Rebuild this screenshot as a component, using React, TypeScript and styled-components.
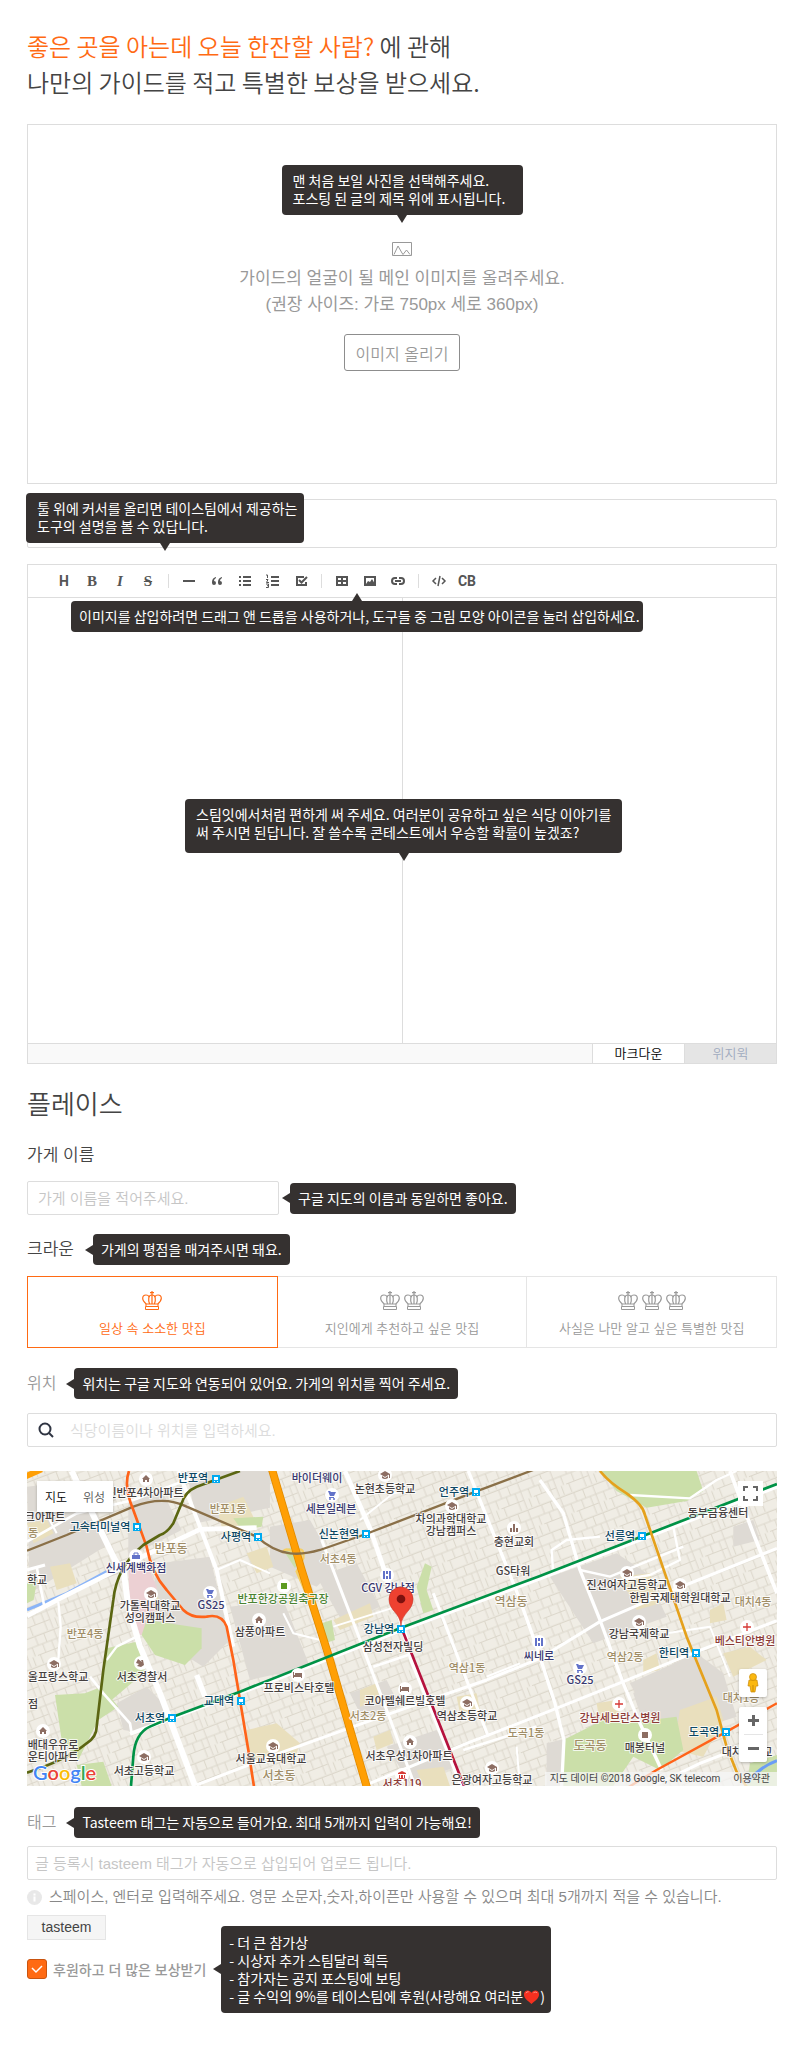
import React from "react";
import styled, { createGlobalStyle, css } from "styled-components";

const GlobalStyle = createGlobalStyle`
  *, *::before, *::after { box-sizing: border-box; }
  body {
    margin: 0;
    background: #fff;
    color: #444;
    font-family: "Liberation Sans", "Noto Sans CJK KR", sans-serif;
  }
  button, input, textarea { font-family: inherit; font-weight: inherit; margin: 0; }
  h1, h2, p { margin: 0; font-weight: 400; }
`;

const ACCENT = "#ff6a13";
const LINE = "#dddddd";

const Page = styled.main`
  padding: 28px 31px 81px 27px;
  font-weight: 350;
`;

const Title = styled.h1`
  font-family: "Noto Sans CJK KR", sans-serif;
  font-size: 24px;
  font-weight: 350;
  line-height: 36px;
  margin-bottom: 24px;
  em { font-style: normal; color: ${ACCENT}; }
`;

/* ---------- tooltips ---------- */

type Side = "top" | "bottom" | "left";

const Tip = styled.div<{ $side: Side }>`
  position: relative;
  z-index: 2;
  background: #353130;
  color: #fff;
  border-radius: 4px;
  font-family: "Noto Sans CJK KR", sans-serif;
  font-size: 14px;
  font-weight: 400;
  line-height: 18px;
  padding: 6px 8px 7px;
  white-space: nowrap;
  text-align: left;
  &::after {
    content: "";
    position: absolute;
    border: 5px solid transparent;
    ${(p) =>
      p.$side === "bottom" &&
      css`top: 100%; left: 50%; margin-left: -5px; border-top: 8px solid #353130; border-bottom: 0;`}
    ${(p) =>
      p.$side === "top" &&
      css`bottom: 100%; left: 50%; margin-left: -5px; border-bottom: 8px solid #353130; border-top: 0;`}
    ${(p) =>
      p.$side === "left" &&
      css`right: 100%; top: 50%; margin-top: -5px; border-right: 8px solid #353130; border-left: 0;`}
  }
`;

const UploadTip = styled(Tip)`
  width: 241px;
  padding: 6px 11px 8px;
`;

const ToolTip = styled(Tip)`
  position: absolute;
  left: -1px;
  top: -6px;
  width: 278px;
  padding: 6px 11px 8px;
`;

const DropTip = styled(Tip)`
  position: absolute;
  left: 43px;
  top: 3px;
  width: 572px;
`;

const WriteTip = styled(Tip)`
  position: absolute;
  left: 50%;
  top: 201px;
  width: 437px;
  margin-left: -217px;
  padding: 6px 11px 12px;
`;

/* ---------- main image ---------- */

const UploadBox = styled.section`
  display: flex;
  flex-direction: column;
  align-items: center;
  height: 360px;
  padding-top: 40px;
  border: 1px solid ${LINE};
  color: #999;
  font-size: 17px;
  line-height: 26px;
  text-align: center;
  svg { margin: 27px 0 10px; }
`;

const UploadButton = styled.button`
  width: 116px;
  height: 37px;
  margin-top: 16px;
  padding: 0;
  border: 1px solid #8d8d8d;
  border-radius: 3px;
  background: #fff;
  color: #999;
  font-size: 16px;
`;

/* ---------- inputs ---------- */

const TextInput = styled.input<{ $soft?: boolean }>`
  display: block;
  width: 100%;
  height: 34px;
  padding: 0 7px;
  border: 1px solid ${LINE};
  border-radius: 2px;
  background: #fff;
  color: #444;
  font-size: 15px;
  outline: none;
  &::placeholder { color: ${(p) => (p.$soft ? "#dcdcdc" : "#c6c6c6")}; opacity: 1; }
`;

const SubjectField = styled.div`
  position: relative;
  margin: 15px 0 16px;
  ${TextInput} { height: 49px; }
`;

/* ---------- editor ---------- */

const Editor = styled.section`
  display: flex;
  flex-direction: column;
  height: 500px;
  border: 1px solid ${LINE};
`;

const Toolbar = styled.div`
  display: flex;
  align-items: center;
  height: 33px;
  padding-left: 22px;
  border-bottom: 1px solid ${LINE};
`;

const Tool = styled.button<{ $serif?: boolean; $italic?: boolean }>`
  display: flex;
  align-items: center;
  justify-content: center;
  width: 28px;
  height: 28px;
  padding: 0;
  border: 0;
  background: none;
  color: #555;
  font-family: ${(p) => (p.$serif ? '"Liberation Serif", serif' : "Roboto, sans-serif")};
  font-size: ${(p) => (p.$serif ? 15 : 14)}px;
  font-weight: 700;
  font-style: ${(p) => (p.$italic ? "italic" : "normal")};
`;

const Divider = styled.span`
  width: 1px;
  height: 14px;
  margin: 0 6px;
  background: #ddd;
`;

const Panes = styled.div`
  position: relative;
  display: flex;
  flex: 1;
`;

const Source = styled.textarea`
  width: 50%;
  padding: 12px;
  border: 0;
  resize: none;
  outline: none;
`;

const Preview = styled.div`
  width: 50%;
  border-left: 1px solid ${LINE};
`;

const ModeBar = styled.div`
  display: flex;
  justify-content: flex-end;
  height: 20px;
  border-top: 1px solid ${LINE};
  background: #f9f9f9;
`;

const ModeTab = styled.button<{ $on?: boolean }>`
  width: 92px;
  padding: 0;
  border: 0;
  border-left: 1px solid ${LINE};
  background: ${(p) => (p.$on ? "#fff" : "#e5e5e5")};
  color: ${(p) => (p.$on ? "#000" : "#a0aabf")};
  font-size: 13px;
  line-height: 18px;
`;

/* ---------- place ---------- */

const PlaceTitle = styled.h2`
  margin: 23px 0 21px;
  font-size: 26px;
  font-weight: 350;
  line-height: 36px;
`;

const Label = styled.label<{ $muted?: boolean }>`
  display: block;
  color: ${(p) => (p.$muted ? "#999" : "#444")};
  font-size: ${(p) => (p.$muted ? 16 : 17)}px;
  line-height: 24px;
`;

const Row = styled.div<{ $top: number; $bottom: number; $gap: number }>`
  display: flex;
  align-items: center;
  gap: ${(p) => p.$gap}px;
  margin: ${(p) => p.$top}px 0 ${(p) => p.$bottom}px;
`;

const NameInput = styled(TextInput)`
  width: 252px;
  padding: 0 10px;
`;

const Grades = styled.div`
  display: flex;
`;

const Grade = styled.button<{ $on?: boolean }>`
  display: flex;
  flex: 1;
  flex-direction: column;
  align-items: center;
  gap: 9px;
  height: 72px;
  padding: 14px 0 0;
  border: 1px solid ${(p) => (p.$on ? ACCENT : "#e5e5e5")};
  background: #fff;
  color: ${(p) => (p.$on ? ACCENT : "#999")};
  font-size: 13px;
  line-height: 20px;
  & + & { border-left: 0; }
  span { display: flex; gap: 4px; }
`;

const Search = styled.div`
  display: flex;
  align-items: center;
  height: 34px;
  padding-left: 10px;
  border: 1px solid ${LINE};
  border-radius: 2px;
  ${TextInput} { flex: 1; height: 30px; border: 0; padding: 0 16px; }
`;

/* ---------- map ---------- */

const MapBox = styled.section`
  position: relative;
  height: 315px;
  margin-top: 24px;
  overflow: hidden;
  background: #f0ede5;
  > svg { display: block; width: 100%; height: 100%; }
`;

const MapTypes = styled.div`
  position: absolute;
  left: 10px;
  top: 10px;
  display: flex;
  border-radius: 2px;
  box-shadow: 0 1px 3px rgba(0, 0, 0, 0.25);
`;

const MapType = styled.button<{ $on?: boolean }>`
  width: 38px;
  height: 31px;
  padding: 0;
  border: 0;
  background: #fff;
  color: ${(p) => (p.$on ? "#000" : "#565656")};
  font-size: 12px;
`;

const Fullscreen = styled.button`
  position: absolute;
  right: 14px;
  top: 10px;
  display: flex;
  align-items: center;
  justify-content: center;
  width: 25px;
  height: 25px;
  padding: 0;
  border: 0;
  background: #fff;
`;

const SideControls = styled.div`
  position: absolute;
  right: 10px;
  bottom: 24px;
  display: flex;
  flex-direction: column;
  gap: 10px;
`;

const Control = styled.div`
  display: flex;
  flex-direction: column;
  align-items: center;
  width: 28px;
  border-radius: 2px;
  background: #fff;
  box-shadow: 0 1px 3px rgba(0, 0, 0, 0.25);
  hr { width: 19px; height: 1px; margin: 0; border: 0; background: #e5e5e5; }
`;

const ControlButton = styled.button<{ $h: number }>`
  display: flex;
  align-items: center;
  justify-content: center;
  width: 28px;
  height: ${(p) => p.$h}px;
  padding: 0;
  border: 0;
  background: none;
`;

const Attribution = styled.div`
  position: absolute;
  right: 0;
  bottom: 0;
  display: flex;
  gap: 13px;
  padding: 0 7px 0 5px;
  background: rgba(245, 245, 245, 0.75);
  color: #444;
  font-family: Roboto, "Noto Sans CJK KR", sans-serif;
  font-size: 10px;
  font-weight: 400;
  line-height: 14px;
  white-space: nowrap;
  a { color: #444; text-decoration: none; }
`;

/* ---------- tags ---------- */

const Hint = styled.p`
  display: flex;
  align-items: center;
  gap: 7px;
  margin: 5px 0 6px;
  color: #888;
  font-size: 15px;
  font-weight: 350;
  line-height: 24px;
  white-space: nowrap;
`;

const Tag = styled.span`
  display: block;
  width: 79px;
  height: 25px;
  border: 1px solid #e5e5e5;
  background: #f5f5f5;
  color: #444;
  font-size: 14px;
  line-height: 23px;
  text-align: center;
`;

const SupportRow = styled.div`
  display: flex;
  align-items: center;
  gap: 15px;
  height: 24px;
  margin-top: 17px;
`;

const SupportLabel = styled.label`
  display: flex;
  align-items: center;
  gap: 6px;
  color: #999;
  font-size: 14px;
  font-weight: 500;
  white-space: nowrap;
`;

const Tick = styled.span`
  position: relative;
  display: flex;
  input {
    appearance: none;
    width: 20px;
    height: 20px;
    margin: 0;
    border: 1px solid #c9540f;
    border-radius: 3px;
    background: ${ACCENT};
  }
  svg { position: absolute; left: 4px; top: 5px; pointer-events: none; }
`;

const SupportTip = styled(Tip)`
  width: 330px;
  padding: 7px 8px 8px;
  svg { vertical-align: -3px; }
`;

/* ---------- icons ---------- */

const Crown = () => (
  <svg width="20" height="19" viewBox="0 0 20 19" fill="none" stroke="currentColor" aria-hidden="true">
    <path d="M10 0v13M8 1.700h4" strokeWidth="1.200" />
    <path d="M4.200 13C1.500 10.500.7 9 .7 7.300.7 5.200 2.200 4 4 4c1.400 0 2.500.6 3.100 1.700M15.800 13c2.700-2.500 3.500-4 3.500-5.700C19.300 5.200 17.800 4 16 4c-1.400 0-2.500.6-3.100 1.700" strokeWidth="1.200" />
    <path d="M7.600 13C6 8.500 6.200 4 10 4s4 4.500 2.400 9" strokeWidth="1.200" />
    <path d="M4 13h12v2.500H4zM3.500 15.500h13v3h-13z" />
  </svg>
);

const ToolIcon = ({ children }: { children: React.ReactNode }) => (
  <svg width="16" height="14" viewBox="0 0 16 14" fill="none" stroke="#555" strokeWidth="2" aria-hidden="true">
    {children}
  </svg>
);

/* ---------- map data ---------- */

type Pt = [number, number];

const stations: [string, number, number, number, number][] = [
  ["반포역", 166, 7, 189, 8],
  ["고속터미널역", 73, 56, 110, 56],
  ["사평역", 209, 66, 231, 66],
  ["교대역", 192, 230, 214, 230],
  ["서초역", 123, 247, 145, 247],
  ["언주역", 427, 21, 449, 21],
  ["신논현역", 312, 63, 339, 63],
  ["강남역", 352, 158, 374, 158],
  ["선릉역", 593, 65, 615, 65],
  ["한티역", 647, 182, 669, 182],
  ["도곡역", 677, 261, 699, 261],
];

type Kind = "poi" | "shop" | "area" | "park" | "hospital";

const labelColor: Record<Kind, string> = {
  poi: "#45403f",
  shop: "#38386f",
  area: "#a08d66",
  park: "#4b8432",
  hospital: "#8c3a36",
};

const labels: [string, number, number, Kind, number?][] = [
  ["신반포4차아파트", 118, 22, "poi"],
  ["크아파트", 18, 46, "poi"],
  ["동", 6, 62, "area"],
  ["반포1동", 201, 38, "area"],
  ["반포동", 144, 78, "area", 12],
  ["신세계백화점", 109, 97, "shop"],
  ["학교", 10, 109, "poi"],
  ["가톨릭대학교", 123, 135, "poi"],
  ["성의캠퍼스", 123, 147, "poi"],
  ["GS25", 184, 134, "shop"],
  ["반포한강공원축구장", 256, 128, "park"],
  ["반포4동", 58, 163, "area"],
  ["삼풍아파트", 233, 161, "poi"],
  ["울프랑스학교", 31, 206, "poi"],
  ["서초경찰서", 115, 206, "poi"],
  ["점", 6, 233, "poi"],
  ["배대우유로", 26, 274, "poi"],
  ["운티아파트", 26, 286, "poi"],
  ["서초고등학교", 117, 300, "poi"],
  ["프로비스타호텔", 272, 217, "poi"],
  ["서울교육대학교", 244, 288, "poi"],
  ["서초동", 252, 305, "area", 12],
  ["바이더웨이", 290, 7, "shop"],
  ["논현초등학교", 358, 18, "poi"],
  ["세븐일레븐", 304, 38, "shop"],
  ["차의과학대학교", 424, 48, "poi"],
  ["강남캠퍼스", 424, 60, "poi"],
  ["충현교회", 487, 71, "poi"],
  ["서초4동", 311, 88, "area"],
  ["GS타워", 486, 100, "poi"],
  ["CGV 강남점", 361, 117, "shop"],
  ["역삼동", 484, 131, "area", 12],
  ["삼성전자빌딩", 366, 176, "poi"],
  ["역삼1동", 440, 197, "area"],
  ["씨네로", 512, 185, "shop"],
  ["코아텔쉐르빌호텔", 378, 230, "poi"],
  ["서초2동", 341, 245, "area"],
  ["역삼초등학교", 440, 245, "poi"],
  ["도곡1동", 499, 262, "area"],
  ["서초우성1차아파트", 382, 285, "poi"],
  ["은광여자고등학교", 465, 309, "poi"],
  ["서초119", 375, 313, "hospital"],
  ["동부금융센터", 691, 42, "poi"],
  ["진선여자고등학교", 600, 114, "poi"],
  ["한림국제대학원대학교", 653, 127, "poi"],
  ["대치4동", 726, 131, "area"],
  ["강남국제학교", 612, 163, "poi"],
  ["베스티안병원", 718, 170, "hospital"],
  ["역삼2동", 598, 186, "area"],
  ["GS25", 553, 209, "shop"],
  ["대치1동", 714, 227, "area"],
  ["강남세브란스병원", 593, 247, "hospital"],
  ["도곡동", 563, 275, "area", 12],
  ["매봉터널", 618, 277, "poi"],
  ["대치중학교", 720, 281, "poi"],
];

type Mark = "school" | "home" | "cart" | "cross" | "film" | "box" | "green" | "bed" | "bag" | "church" | "bank" | "police";

const marks: [Mark, number, number][] = [
  ["home", 119, 8], ["bag", 109, 85], ["school", 124, 123], ["cart", 183, 122],
  ["home", 232, 149], ["school", 27, 193], ["police", 114, 192], ["home", 16, 260],
  ["school", 117, 286], ["school", 246, 275], ["school", 358, 4], ["cart", 305, 24],
  ["school", 425, 35], ["church", 487, 57], ["film", 360, 104], ["green", 257, 115],
  ["bed", 271, 204], ["bed", 378, 218], ["school", 440, 232], ["home", 383, 271],
  ["school", 465, 297], ["bank", 375, 304], ["film", 512, 171], ["school", 600, 102],
  ["school", 653, 114], ["school", 612, 151], ["cross", 720, 156], ["cart", 553, 197],
  ["cross", 592, 233], ["box", 618, 264],
];

const markShape: Record<Mark, React.ReactNode> = {
  school: <g fill="#8d6e63"><path d="M-5-1 0-4 5-1 0 2z" /><path d="M-3 1v2q3 2 6 0V1L0 3zM4-1h1v4H4z" /></g>,
  home: <path fill="#8d6e63" d="M-4 0 0-4 4 0H3v3H1V1h-2v2h-2V0z" />,
  cart: <g fill="#6272c9"><path d="M-4-4h2l1 1h5L2 1h-4z" /><path d="M-3 2h5v1h-5z" /><circle cx="-2" cy="4" r="1" /><circle cx="2" cy="4" r="1" /></g>,
  bag: <g><path fill="#6272c9" d="M-4-1h8v4h-8z" /><path d="M-2-1v-2h4v2" fill="none" stroke="#6272c9" /></g>,
  cross: <path d="M-4 0h8M0-4v8" stroke="#d63a36" strokeWidth="1.3" />,
  film: <g fill="#6272c9"><path d="M-4-4h2v8h-2zM2-4h2v8H2zM-1-4h2v3h-2zM-1 1h2v3h-2z" /></g>,
  box: <path fill="#8d6e63" d="M-3-3h6v6h-6z" />,
  green: <path fill="#5c9b22" d="M-3-3h6v6h-6z" />,
  bed: <path fill="#8d6e63" d="M-5-3h1v3h1v-2h7v5H3V2h-7v1h-1z" />,
  church: <path fill="#8d6e63" d="M-1-4h2v8h-2zM-4 0h2v4h-2zM2 0h2v4H2z" />,
  bank: <path fill="#d63a36" d="M-4-2 0-4l4 2v1h-8zM-3 0h1v3h-1zM-1 0h2v3h-2zM2 0h1v3H2zM-4 3h8v1h-8z" />,
  police: <path fill="#8d6e63" d="M-3-4 1-1 0-3h2l1 5-3 2-4-1 2-2-3-1z" />,
};

const toPath = (pts: Pt[]) => "M" + pts.map((p) => p.join(" ")).join("L");

/* Streets and blocks are drawn on a grid three times finer than the map. */
const majorRoads: [number, Pt[]][] = [
  [18, [[215, 33], [345, 300], [372, 340], [385, 440], [420, 560], [480, 700], [585, 978]]],
  [12, [[535, 33], [600, 200], [650, 330], [680, 470], [700, 560]]],
  [14, [[81, 468], [180, 415], [340, 335], [410, 298], [600, 208], [770, 203]]],
  [10, [[81, 330], [135, 315]]],
  [8, [[110, 320], [132, 435]]],
  [7, [[175, 425], [182, 500], [175, 600]]],
  [8, [[81, 245], [230, 160], [400, 120], [560, 60], [610, 33]]],
  [6, [[128, 140], [170, 220]]],
  [7, [[410, 530], [350, 560], [320, 600]]],
  [8, [[270, 650], [310, 700], [390, 790], [395, 820]]],
  [12, [[390, 822], [515, 775], [810, 665], [1200, 512], [1620, 355], [2331, 80]]],
  [9, [[590, 975], [810, 890], [1045, 805], [1230, 740], [1460, 660], [1620, 595], [1800, 485], [2020, 390], [2331, 265]]],
  [9, [[1110, 970], [1400, 850], [1620, 765], [1870, 665], [2090, 575], [2331, 482]]],
  [14, [[1035, 33], [1110, 205], [1160, 350], [1205, 490], [1235, 600], [1300, 760], [1385, 978]]],
  [9, [[965, 240], [1065, 500], [1160, 750], [1245, 978]]],
  [9, [[1300, 400], [1350, 530], [1465, 830]]],
  [10, [[1405, 33], [1500, 270], [1560, 420], [1610, 560], [1665, 730], [1692, 840], [1685, 978]]],
  [10, [[1620, 60], [1690, 160], [1740, 330], [1800, 480], [1870, 670], [1920, 790], [1985, 930]]],
  [11, [[2190, 33], [2260, 220], [2331, 400]]],
  [7, [[1890, 105], [2070, 115], [2150, 60], [2210, 33]]],
  [7, [[1830, 365], [1950, 345], [2040, 300], [2020, 200]]],
  [7, [[1660, 340], [1655, 270], [1700, 240], [1800, 230]]],
  [7, [[1740, 330], [1830, 350], [2050, 260]]],
  [6, [[650, 330], [720, 300], [810, 340]]],
  [6, [[1000, 500], [1190, 440]]],
  [6, [[850, 460], [880, 520], [960, 540]]],
  [8, [[1120, 620], [1240, 580]]],
  [6, [[1460, 650], [1560, 610]]],
  [6, [[1080, 180], [1180, 100], [1240, 90]]],
  [8, [[1390, 870], [1610, 800]]],
  [6, [[1550, 860], [1560, 978]]],
  [6, [[2000, 520], [2130, 500], [2190, 650]]],
  [9, [[1960, 978], [2100, 910], [2230, 860]]],
];

const grayBlocks = [
  "M81 80 250 60 330 250 90 400z", "M560 33h250v110L590 190z", "M385 120l100-30 60 120-160 80z",
  "M480 310l150-20 60 250-80 80-190-120z", "M690 440l160-20 80 200-180 40z",
  "M350 730l90-50 60 60-70 80-60-10z", "M810 200l120-20 80 140-60 60-140-60z",
  "M950 350l120-40 70 130-110 50z", "M1650 350l200-70 90 60 60 130-220 80z",
  "M1900 700l140-80 60 60-30 90-140 20z", "M1890 670l200-90 80 60 40 130-220 70z",
  "M1050 700l110-40 40 80-110 40z", "M1160 860l150-50 60 110-140 50z", "M1640 850l80-20 10 148h-90z",
  "M2200 200l60-20 20 60-80 20z", "M810 560l100 40-40 50-60-10z",
];

const sandBlocks = [
  "M650 140l80-30 30 60-30 60-60-10z", "M740 280l60-20 20 60-50 20z", "M150 320l60-10 20 60-60 20z",
  "M81 190l60-10 20 40-60 30z", "M400 400l60-30 20 60-50 30z", "M740 810l90-20 70 60-20 60-130-10z",
  "M1000 480l110-50 10 40-100 40z", "M1080 690l50-20 10 50-60 20z", "M1120 830l50-20 10 40-50 20z",
  "M1370 710l60-10 10 50-60 10z", "M1250 930l80-10 20 58h-80z", "M1860 350l90-10 30 90-70 20z",
  "M2130 450l40-20 10 50-50 10z", "M2170 580l80-20 50 40-100 50z", "M2040 750l110-40 20 70-60 110-90-20z",
  "M1930 600l40-20 10 50-50 10z", "M1790 730l60-10 10 60-60 10z",
];

const greenBlocks = [
  "M440 480l100 15 65 10v60l-50 50-90-30-40-60z", "M320 565l90-20 25 90-100 85-40-10z",
  "M165 705l90-5 50-20 50 60-60 40-60 120-50-60z", "M230 915l80-10 25 73h-90z",
  "M1275 310l20 10-15 70 20 60-30 10-20-80z", "M1800 33h290l20 60-50 30-120 20-90-50z",
  "M1690 840l120-60 60 10 160-20 20 100-70 60-80-40-60 88h-160z", "M700 175l90-5-5 30-60 10z",
  "M850 270l30-10 30 20-25 45z", "M965 490l30-10 10 60-30 10z", "M2250 910l81-25v93h-90z",
  "M81 370l30-10-10 60-20 10z",
];

const Transit = ({ pts, color, w }: { pts: string; color: string; w: number }) => (
  <path d={pts} stroke={color} strokeWidth={w} fill="none" strokeLinejoin="round" />
);

const CityMap = () => (
  <svg viewBox="0 0 750 315" preserveAspectRatio="xMidYMid slice" role="img" aria-label="강남역 지도">
    <defs>
      <pattern id="lanes" width="104" height="88" patternUnits="userSpaceOnUse" patternTransform="rotate(-21)">
        <path d="M0 4h104M0 32h104M0 60h70M12 4v28M40 4v28M72 4v84M26 32v28M54 32v56M96 32v28M8 60v28M88 60v28" stroke="#dcd7cb" strokeWidth="3" fill="none" />
      </pattern>
    </defs>
    <g transform="scale(.3333) translate(-81 -33)">
      <path d="M81 33h2260v950H81z" fill="#f0ede5" />
      <path d="M81 33h2260v950H81z" fill="url(#lanes)" />
      {grayBlocks.map((d) => <path key={d} d={d} fill="#dedad4" />)}
      {sandBlocks.map((d) => <path key={d} d={d} fill="#e9dfbd" />)}
      <path d="M385 330l60-10 25 60-10 140-40 5-30-90z" fill="#ecd0d3" />
      {greenBlocks.map((d) => <path key={d} d={d} fill="#cbdfa9" />)}
      <path d="M81 450 200 400 320 335" stroke="#8ab4f8" strokeWidth="9" fill="none" />
      <path d="M2240 970q40-50 91-68" stroke="#6b9df5" strokeWidth="9" fill="none" />
      {majorRoads.map(([w, pts], i) => (
        <path key={i} d={toPath(pts)} stroke="#fff" strokeWidth={w} fill="none" strokeLinejoin="round" />
      ))}
      <path d="M590 645l25 65" stroke="#fff" strokeWidth="16" />
      <path d="M850 280q0-20 30-5 35-20 30 20l-20 40 30 70" stroke="#f6cf65" strokeWidth="7" fill="none" />
      <path d="M815 25 905 330 990 600 1045 790 1103 990" stroke="#e18b00" strokeWidth="24" fill="none" />
      <path d="M815 25 905 330 990 600 1045 790 1103 990" stroke="#ff9f05" strokeWidth="19" fill="none" />
      <path d="M75 50 125 28" stroke="#ff9f05" strokeWidth="18" />
      <Transit color="#8a7048" w={7} pts="M81 272 200 225 400 140Q490 105 560 140L770 230Q820 275 870 280 910 285 960 270L1098 222 1427 95 1600 30" />
      <Transit color="#ff6319" w={8} pts="M387 33Q370 80 400 150L440 260Q455 340 500 390L550 450Q575 475 620 470 665 460 680 500L700 600 720 720 745 870 762 980" />
      <Transit color="#ff6319" w={7} pts="M1880 985 1970 930 2180 815 2331 730" />
      <Transit color="#5b6612" w={8} pts="M720 33 590 80Q555 95 545 130L520 190Q500 220 480 225L430 255Q350 320 340 420L310 630 290 800Q290 830 260 850 200 900 81 938" />
      <Transit color="#009246" w={8} pts="M393 978 400 890Q405 820 450 800L515 772 720 695 1200 505 1620 348 2331 72" />
      <Transit color="#b5123e" w={8} pts="M1205 505 1290 720 1395 985" />
      <Transit color="#e5a11c" w={8} pts="M1800 33Q1830 70 1880 100 1930 135 1935 165L2060 530 2150 750 2180 860 2210 935 2240 980" />
    </g>
    {marks.map(([kind, x, y], i) => (
      <g key={i} transform={`translate(${x} ${y})`}>
        <circle r="7" fill="#fff" />
        {markShape[kind]}
      </g>
    ))}
    <g
      fontFamily='"Noto Sans CJK KR", sans-serif'
      fontWeight="500"
      textAnchor="middle"
      stroke="#fff"
      strokeOpacity=".8"
      strokeWidth="2"
      paintOrder="stroke"
      strokeLinejoin="round"
    >
      {labels.map(([text, x, y, kind, size], i) => (
        <text key={i} x={x} y={y + 4} fontSize={size ?? 11} fill={labelColor[kind]}>{text}</text>
      ))}
      {stations.map(([text, x, y]) => (
        <text key={text} x={x} y={y + 4} fontSize="11" fill="#0d4764">{text}</text>
      ))}
    </g>
    {stations.map(([text, , , x, y]) => (
      <g key={text} transform={`translate(${x} ${y})`}>
        <path d="M-4-4h8v8h-8z" fill="#00aaf0" />
        <path d="M-2-2h4v3h-4zM-2 2h1v1h-1zM1 2h1v1H1z" fill="#fff" />
      </g>
    ))}
    <g transform="translate(374 155)">
      <path d="M0 0C-1-14-12-15-12-27a12 12 0 0 1 24 0C12-15 1-14 0 0z" fill="#ee4130" stroke="#c6362a" strokeWidth=".6" />
      <circle cy="-27" r="4.300" fill="#7d110e" />
    </g>
    <text x="6" y="309" fontFamily="Lato, sans-serif" fontSize="20" fontWeight="600" stroke="#fff" strokeWidth="2" paintOrder="stroke">
      <tspan fill="#4285f4">G</tspan><tspan fill="#ea4335">o</tspan><tspan fill="#fbbc05">o</tspan>
      <tspan fill="#4285f4">g</tspan><tspan fill="#34a853">l</tspan><tspan fill="#ea4335">e</tspan>
    </text>
  </svg>
);

/* ---------- page ---------- */

const grades = ["일상 속 소소한 맛집", "지인에게 추천하고 싶은 맛집", "사실은 나만 알고 싶은 특별한 맛집"];

export default function App() {
  return (
    <>
      <GlobalStyle />
      <Page>
        <Title>
          <em>좋은 곳을 아는데 오늘 한잔할 사람?</em> 에 관해
          <br />
          나만의 가이드를 적고 특별한 보상을 받으세요.
        </Title>

        <UploadBox>
          <UploadTip $side="bottom">
            맨 처음 보일 사진을 선택해주세요.
            <br />
            포스팅 된 글의 제목 위에 표시됩니다.
          </UploadTip>
          <svg width="20" height="14" viewBox="0 0 20 14" fill="none" stroke="#999" aria-hidden="true">
            <path d="M.5.5h19v13H.5z" />
            <path d="M2 12.500 6 4l4 7 1 1.500L14.500 8l3.500 4.500" />
          </svg>
          <p>가이드의 얼굴이 될 메인 이미지를 올려주세요.</p>
          <p>(권장 사이즈: 가로 750px 세로 360px)</p>
          <UploadButton type="button">이미지 올리기</UploadButton>
        </UploadBox>

        <SubjectField>
          <TextInput aria-label="제목" />
          <ToolTip $side="bottom">
            툴 위에 커서를 올리면 테이스팀에서 제공하는
            <br />
            도구의 설명을 볼 수 있답니다.
          </ToolTip>
        </SubjectField>

        <Editor>
          <Toolbar>
            <Tool type="button">H</Tool>
            <Tool type="button" $serif>B</Tool>
            <Tool type="button" $serif $italic>I</Tool>
            <Tool type="button" $serif><s>S</s></Tool>
            <Divider />
            <Tool type="button" aria-label="줄"><ToolIcon><path d="M2 7h12" /></ToolIcon></Tool>
            <Tool type="button" aria-label="인용">
              <ToolIcon>
                <g fill="#555" stroke="none">
                  <path d="M7 3Q3 4 3 8v1a2 2 0 1 0 2-2q0-2 2-3zM13 3Q9 4 9 8v1a2 2 0 1 0 2-2q0-2 2-3z" />
                </g>
              </ToolIcon>
            </Tool>
            <Tool type="button" aria-label="목록"><ToolIcon><path d="M2 3h2M2 7h2M2 11h2M6 3h8M6 7h8M6 11h8" /></ToolIcon></Tool>
            <Tool type="button" aria-label="번호 목록">
              <ToolIcon>
                <path d="M6 3h8M6 7h8M6 11h8" />
                <path d="M1 1h1.500v3M1 5.500h2L1.500 8.500H4M1 10h2.500v3.500H1M2 11.700h1.500" strokeWidth="1" />
              </ToolIcon>
            </Tool>
            <Tool type="button" aria-label="할 일"><ToolIcon><path d="M11 3H4v8h9V8M6 6l2.500 2.500L14 3" /></ToolIcon></Tool>
            <Divider />
            <Tool type="button" aria-label="표"><ToolIcon><path d="M3 3h10v8H3zM3 7h10M8 3v8" /></ToolIcon></Tool>
            <Tool type="button" aria-label="그림">
              <ToolIcon>
                <path d="M3 3h10v8H3z" />
                <path d="M4 10 6 7l2 1 2-3 3 5z" fill="#555" stroke="none" />
              </ToolIcon>
            </Tool>
            <Tool type="button" aria-label="링크"><ToolIcon><path d="M7 4H5a3 3 0 0 0 0 6h2M9 4h2a3 3 0 0 1 0 6H9M5 7h6" /></ToolIcon></Tool>
            <Divider />
            <Tool type="button" aria-label="코드"><ToolIcon><path d="M5 4 2 7l3 3M11 4l3 3-3 3M9 2 7 12" strokeWidth="1.500" /></ToolIcon></Tool>
            <Tool type="button">CB</Tool>
          </Toolbar>
          <Panes>
            <Source aria-label="본문" />
            <Preview />
            <DropTip $side="top">
              이미지를 삽입하려면 드래그 앤 드롭을 사용하거나, 도구들 중 그림 모양 아이콘을 눌러 삽입하세요.
            </DropTip>
            <WriteTip $side="bottom">
              스팀잇에서처럼 편하게 써 주세요. 여러분이 공유하고 싶은 식당 이야기를
              <br />
              써 주시면 된답니다. 잘 쓸수록 콘테스트에서 우승할 확률이 높겠죠?
            </WriteTip>
          </Panes>
          <ModeBar>
            <ModeTab type="button" $on>마크다운</ModeTab>
            <ModeTab type="button">위지윅</ModeTab>
          </ModeBar>
        </Editor>

        <PlaceTitle>플레이스</PlaceTitle>

        <Label htmlFor="shop">가게 이름</Label>
        <Row $top={13} $bottom={19} $gap={11}>
          <NameInput id="shop" placeholder="가게 이름을 적어주세요." />
          <Tip $side="left">구글 지도의 이름과 동일하면 좋아요.</Tip>
        </Row>

        <Row $top={0} $bottom={11} $gap={19}>
          <Label as="span">크라운</Label>
          <Tip $side="left">가게의 평점을 매겨주시면 돼요.</Tip>
        </Row>
        <Grades>
          {grades.map((text, i) => (
            <Grade key={text} type="button" $on={i === 0}>
              <span>{Array.from({ length: i + 1 }, (_, n) => <Crown key={n} />)}</span>
              {text}
            </Grade>
          ))}
        </Grades>

        <Row $top={20} $bottom={14} $gap={18}>
          <Label htmlFor="location" $muted>위치</Label>
          <Tip $side="left">위치는 구글 지도와 연동되어 있어요. 가게의 위치를 찍어 주세요.</Tip>
        </Row>
        <Search>
          <svg width="16" height="16" viewBox="0 0 16 16" fill="none" stroke="#2f3442" strokeWidth="2" aria-hidden="true">
            <circle cx="7" cy="7" r="5.500" />
            <path d="m11 11 4 4" />
          </svg>
          <TextInput id="location" $soft placeholder="식당이름이나 위치를 입력하세요." />
        </Search>

        <MapBox>
          <CityMap />
          <MapTypes>
            <MapType type="button" $on>지도</MapType>
            <MapType type="button">위성</MapType>
          </MapTypes>
          <Fullscreen type="button" aria-label="전체 화면">
            <svg width="15" height="15" viewBox="0 0 15 15" fill="none" stroke="#666" strokeWidth="2">
              <path d="M1 5V1h4M10 1h4v4M14 10v4h-4M5 14H1v-4" />
            </svg>
          </Fullscreen>
          <SideControls>
            <Control>
              <ControlButton type="button" $h={28} aria-label="거리뷰">
                <svg width="12" height="20" viewBox="0 0 12 20">
                  <path d="M2 7h8l1 6H9l-1 6H4l-1-6H1z" fill="#fbb80f" stroke="#c98a0a" strokeWidth=".7" />
                  <circle cx="6" cy="4" r="3.500" fill="#fbb80f" stroke="#c98a0a" strokeWidth=".7" />
                  <path d="M6 12v7" stroke="#c98a0a" />
                </svg>
              </ControlButton>
            </Control>
            <Control>
              <ControlButton type="button" $h={27} aria-label="확대">
                <svg width="11" height="11" viewBox="0 0 11 11" stroke="#666" strokeWidth="3"><path d="M0 5.500h11M5.500 0v11" /></svg>
              </ControlButton>
              <hr />
              <ControlButton type="button" $h={27} aria-label="축소">
                <svg width="11" height="11" viewBox="0 0 11 11" stroke="#666" strokeWidth="3"><path d="M0 5.500h11" /></svg>
              </ControlButton>
            </Control>
          </SideControls>
          <Attribution>
            <span>지도 데이터 ©2018 Google, SK telecom</span>
            <a href="#terms">이용약관</a>
          </Attribution>
        </MapBox>

        <Row $top={21} $bottom={8} $gap={18}>
          <Label htmlFor="tags" $muted>태그</Label>
          <Tip $side="left">Tasteem 태그는 자동으로 들어가요. 최대 5개까지 입력이 가능해요!</Tip>
        </Row>
        <TextInput id="tags" placeholder="글 등록시 tasteem 태그가 자동으로 삽입되어 업로드 됩니다." />
        <Hint>
          <svg width="15" height="15" viewBox="0 0 15 15" aria-hidden="true">
            <circle cx="7.500" cy="7.500" r="7.500" fill="#e8e8e8" />
            <path d="M6.500 3.500h2v2h-2zM6.500 6.500h2v5h-2z" fill="#fff" />
          </svg>
          스페이스, 엔터로 입력해주세요. 영문 소문자,숫자,하이픈만 사용할 수 있으며 최대 5개까지 적을 수 있습니다.
        </Hint>
        <Tag>tasteem</Tag>

        <SupportRow>
          <SupportLabel>
            <Tick>
              <input type="checkbox" defaultChecked />
              <svg width="12" height="10" viewBox="0 0 12 10" fill="none" stroke="#fff" strokeWidth="1.500"><path d="m1 4 4 4 6-6" /></svg>
            </Tick>
            후원하고 더 많은 보상받기
          </SupportLabel>
          <SupportTip $side="left">
            - 더 큰 참가상
            <br />
            - 시상자 추가 스팀달러 획득
            <br />
            - 참가자는 공지 포스팅에 보팅
            <br />
            - 글 수익의 9%를 테이스팀에 후원(사랑해요 여러분
            <svg width="17" height="16" viewBox="0 0 18 16" role="img" aria-label="하트">
              <path d="M9 15.500C4 11.500 1 9 1 5.200 1 2.500 2.800 1 5 1c1.800 0 3.200 1 4 2.600C9.800 2 11.200 1 13 1c2.200 0 4 1.500 4 4.200 0 3.800-3 6.300-8 10.300z" fill="#f5301f" />
              <path d="M3 4q1-2 3-1.500M11 3.500q2-1.500 4 0" stroke="#ff9285" fill="none" />
            </svg>
            )
          </SupportTip>
        </SupportRow>
      </Page>
    </>
  );
}
